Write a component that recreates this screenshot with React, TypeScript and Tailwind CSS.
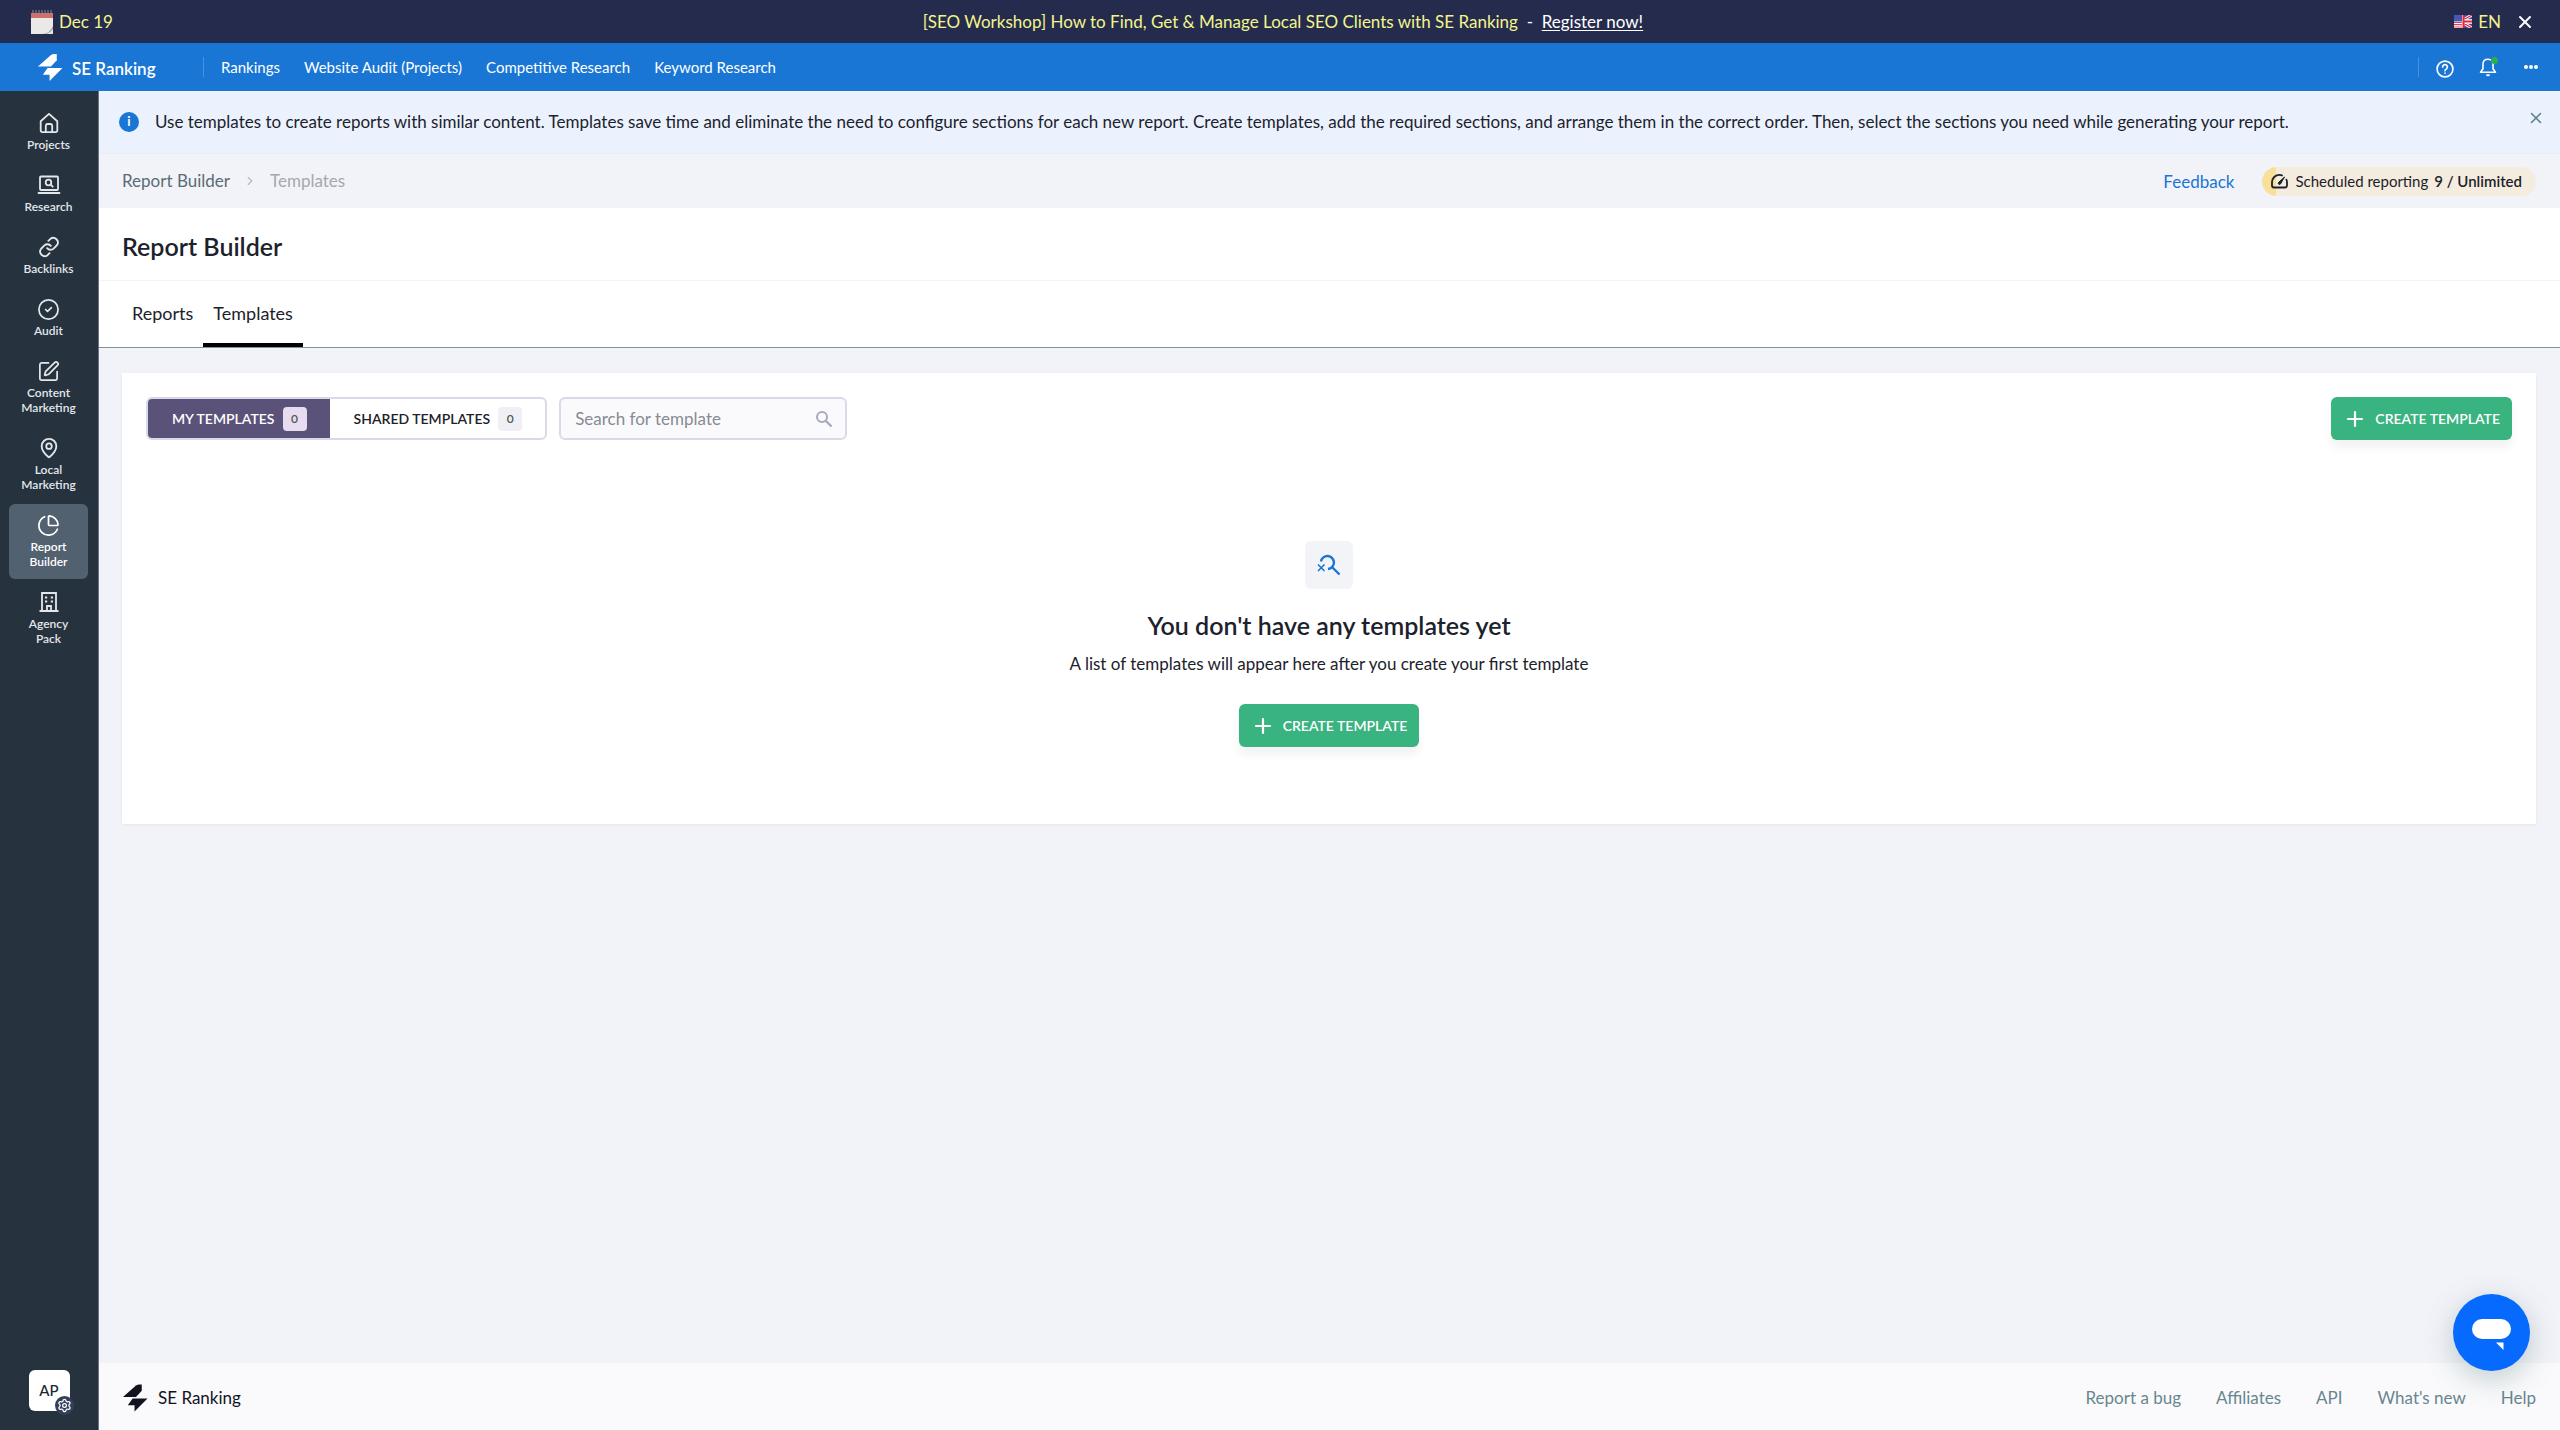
import React, { useState } from 'react';
import { X, ChevronRight, CircleCheck, SquarePen, MapPin, ChartPie, Plus, Settings } from 'lucide-react';

interface NavItem {
  label: string;
  icon: React.ReactNode;
}

const LaptopSearchIcon = () => (
  <svg width="24" height="20" viewBox="0 0 24 20" fill="none" stroke="currentColor" strokeWidth="1.8" strokeLinecap="round">
    <rect x="3" y="1.5" width="18" height="13.5" rx="1" />
    <path d="M1.5 18h21" />
    <circle cx="11.5" cy="7.5" r="2.8" />
    <path d="M13.7 9.7l2 2" />
  </svg>
);

const ChainIcon = () => (
  <svg width="22" height="22" viewBox="0 0 24 24" fill="none" stroke="currentColor" strokeWidth="2" strokeLinecap="round" strokeLinejoin="round">
    <path d="M10 13.2a4.8 4.8 0 0 0 7 .5l3.6-3.6a5 5 0 0 0-7-7L11.3 5.3" />
    <path d="M14 10.8a4.8 4.8 0 0 0-7-.5l-3.6 3.6a5 5 0 0 0 7 7l2.2-2.2" />
  </svg>
);

const HomeIcon = () => (
  <svg width="20" height="20" viewBox="0 0 20 20" fill="none" stroke="currentColor" strokeWidth="1.8" strokeLinejoin="round">
    <path d="M1.7 8.2L10 .9l8.3 7.3v9.3a1.6 1.6 0 0 1-1.6 1.6H3.3a1.6 1.6 0 0 1-1.6-1.6z" />
    <path d="M6.8 19v-6a2 2 0 0 1 2-2h2.4a2 2 0 0 1 2 2v6" />
  </svg>
);

const BuildingIcon = () => (
  <svg width="20" height="20" viewBox="0 0 20 20" fill="none" stroke="currentColor" strokeWidth="1.8">
    <path d="M.5 19h19M3 19V1h14v18M8 19v-5h4v5" />
    <path d="M6 5.5h2.2M11.8 5.5H14M6 9.5h2.2M11.8 9.5H14" strokeWidth="2" />
  </svg>
);

const BoltLogo = ({ className }: { className: string }) => (
  <svg className={className} viewBox="0 0 26 28" fill="currentColor">
    <path d="M0 13L13.5 1Q15 0 17 0h2.5v6.5L13.5 13z" />
    <path d="M10 14.5h15.5L12 28v-6.5H5z" />
  </svg>
);

const CalendarIcon = () => (
  <svg width="22" height="24" viewBox="0 0 22 24">
    <path d="M0 3h22v21H0z" fill="#ebe9e8" />
    <path d="M0 3h22v5H0z" fill="#cf6f6c" />
    <path d="M2 0v4M5 0v4M8 0v4M11 0v4M14 0v4M17 0v4M20 0v4" stroke="#8d8f9c" strokeWidth="1" />
    <path d="M12 24q7-1 10-8v8z" fill="#9b9b9b" />
    <path d="M15 24q5-2 7-5v5z" fill="#e4e4e4" />
  </svg>
);

const FlagIcon = () => (
  <svg width="18" height="13" viewBox="0 0 18 13">
    <path d="M0 0h18v13H0z" fill="#fff" />
    <path d="M0 7.5h8M0 9.7h8M0 12h8" stroke="#e0445a" strokeWidth="1.2" />
    <path d="M0 0h8v6.5H0z" fill="#4a56b5" />
    <path d="M9 0h9v13H9z" fill="#3c4aa8" />
    <path d="M9 5l9-5M9 8l9 5" stroke="#fff" strokeWidth="3" />
    <path d="M9 5l9-5M9 8l9 5" stroke="#e3243b" strokeWidth="1.2" />
    <path d="M8.5 6.5H18" stroke="#fff" strokeWidth="4.5" />
    <path d="M8.5 6.5H18M9.5 0v13" stroke="#e3243b" strokeWidth="2" />
  </svg>
);

const items: NavItem[] = [
  { label: 'Projects', icon: <HomeIcon /> },
  { label: 'Research', icon: <LaptopSearchIcon /> },
  { label: 'Backlinks', icon: <ChainIcon /> },
  { label: 'Audit', icon: <CircleCheck size={23} strokeWidth={1.8} /> },
  { label: 'Content Marketing', icon: <SquarePen size={23} strokeWidth={1.8} /> },
  { label: 'Local Marketing', icon: <MapPin size={22} strokeWidth={2} /> },
  { label: 'Report Builder', icon: <ChartPie size={23} strokeWidth={1.8} /> },
  { label: 'Agency Pack', icon: <BuildingIcon /> },
];

const topLinks = ['Rankings', 'Website Audit (Projects)', 'Competitive Research', 'Keyword Research'];
const footerLinks = ['Report a bug', 'Affiliates', 'API', "What's new", 'Help'];

const CreateButton = () => (
  <button className="flex h-[43px] items-center gap-2 rounded-md bg-[#39b380] px-3 text-[14px] font-semibold text-white shadow-[0_8px_10px_rgba(0,0,0,0.05)]">
    <Plus size={24} strokeWidth={2.2} />
    CREATE TEMPLATE
  </button>
);

const PromoBar = () => (
  <div className="grid h-[43px] grid-cols-[1fr_auto_1fr] items-center bg-[#252b4d] pl-[31px] pr-[25px] text-[17px] text-[#f3f58c]">
    <div className="flex items-center gap-[6px]">
      <CalendarIcon />
      Dec 19
    </div>
    <p>
      [SEO Workshop] How to Find, Get &amp; Manage Local SEO Clients with SE Ranking{' '}
      <span className="text-white">&nbsp;-&nbsp; <a href="#" className="underline underline-offset-2">Register now!</a></span>
    </p>
    <div className="flex items-center justify-end gap-[6px]">
      <FlagIcon />
      EN
      <button className="ml-2 text-white" aria-label="Close announcement"><X size={20} strokeWidth={2.4} /></button>
    </div>
  </div>
);

const TopNav = () => (
  <header className="flex h-12 items-center bg-[#1976d4] pr-[19px] text-white">
    <a href="#" className="flex w-[203px] items-center gap-[9px] pl-[38px] text-[17px] font-semibold">
      <BoltLogo className="h-[27px] w-[25px]" />
      <span className="pt-1">SE Ranking</span>
    </a>
    <nav className="flex items-center gap-6 border-l border-white/20 pl-[17px] text-[15px] leading-5">
      {topLinks.map((link) => (
        <a key={link} href="#">{link}</a>
      ))}
    </nav>
    <div className="ml-auto flex h-5 items-center gap-[23px] border-l border-white/20 pl-4">
      <button aria-label="Help" className="pt-1">
        <svg width="20" height="20" viewBox="0 0 24 24" fill="none" stroke="currentColor" strokeWidth="2" strokeLinecap="round">
          <circle cx="12" cy="12" r="9.5" />
          <path d="M9.2 9.7a2.8 2.8 0 1 1 4.5 2.1c-1 .7-1.7 1.2-1.7 2.4M12 17v.2" />
        </svg>
      </button>
      <button className="relative" aria-label="Notifications">
        <svg width="20" height="20" viewBox="0 0 20 20" fill="none" stroke="currentColor" strokeWidth="1.6" strokeLinejoin="round">
          <path d="M10 2.2c-3.2 0-5 2.200-5 5v4.600L2.500 15.200h15L15 11.800V7.200c0-2.800-1.800-5-5-5z" />
          <path d="M8.3 18.2h3.4" strokeWidth="1.8" />
        </svg>
        <span className="absolute right-0 top-0 h-[7px] w-[7px] rounded-full bg-[#27b04f]" />
      </button>
      <button className="flex h-5 w-5 items-center justify-center gap-px" aria-label="More">
        <span className="h-1 w-1 rounded-full bg-white" />
        <span className="h-1 w-1 rounded-full bg-white" />
        <span className="h-1 w-1 rounded-full bg-white" />
      </button>
    </div>
  </header>
);

const Sidebar = () => (
  <aside className="flex w-[99px] shrink-0 flex-col border-r border-[#6c7683] bg-[#26323d] pb-[19px] pt-[11px] text-[#e3e7ec]">
    <nav className="flex flex-col gap-[2px] pl-[9px] pr-[10px]">
      {items.map((item) => (
        <a
          key={item.label}
          href="#"
          className={`flex flex-col items-center gap-1 rounded-md px-2 pb-[10px] pt-[11px] text-center text-xs font-semibold leading-[15px] ${item.label === 'Report Builder' ? 'bg-[#526170] text-white' : ''}`}
        >
          <span className="flex h-5 items-center">{item.icon}</span>
          {item.label}
        </a>
      ))}
    </nav>
    <div className="mt-auto flex justify-center">
      <button className="relative h-[41px] w-[41px] rounded-md bg-white text-[15px] font-medium text-[#20262e]">
        AP
        <span className="absolute -bottom-1 -right-1 rounded-full bg-[#33405c] p-[2px] text-white"><Settings size={15} /></span>
      </button>
    </div>
  </aside>
);

const App = () => {
  const [query, setQuery] = useState('');

  return (
    <div className="flex min-h-screen flex-col bg-[#f2f3f8] font-[Lato,sans-serif] text-[#1c222b]">
      <PromoBar />
      <TopNav />
      <div className="flex flex-1">
        <Sidebar />
        <div className="flex min-w-0 flex-1 flex-col">
          {/* Hint */}
          <div className="flex h-[63px] items-center border-b border-[#e8eef8] bg-[#ebf2fe] pl-5 pr-[15px] text-[17px]">
            <span className="mr-4 flex h-5 w-5 shrink-0 items-center justify-center rounded-full bg-[#1976d4] text-[13px] font-bold text-white">i</span>
            <p>Use templates to create reports with similar content. Templates save time and eliminate the need to configure sections for each new report. Create templates, add the required sections, and arrange them in the correct order. Then, select the sections you need while generating your report.</p>
            <button className="mb-2 ml-auto text-[#5c7d8c]" aria-label="Close hint"><X size={18} /></button>
          </div>

          {/* Breadcrumbs */}
          <div className="flex h-[54px] items-center pl-[23px] pr-6 text-[17px]">
            <a href="#" className="text-[#5a6b77]">Report Builder</a>
            <ChevronRight size={14} className="mx-[13px] text-[#b4bac2]" />
            <span className="text-[#a3a8b0]">Templates</span>
            <a href="#" className="ml-auto mr-7 pt-[2px] text-[#1976d4]">Feedback</a>
            <div className="flex h-[29px] items-center gap-[6px] rounded-full bg-[linear-gradient(90deg,#f9e09a_14px,#f4eddf_14px)] pl-2 pr-[14px] text-[15px]">
              <svg width="19" height="17" viewBox="0 0 19 17" fill="none" stroke="currentColor" strokeWidth="1.8" strokeLinecap="round" strokeLinejoin="round">
                <path d="M12 2.4Q10.5 1.8 9.5 1.8A7.5 7.5 0 0 0 2 9.3V12.5q0 2 2 2H15q2 0 2-2V9.3q0-1.5-.6-2.7" />
                <path d="M8.5 9.5L14.5 4l-4 7a1.2 1.2 0 0 1-2-1.5z" fill="currentColor" strokeWidth="1" />
              </svg>
              Scheduled reporting
              <b className="text-[15px] font-semibold">9 / Unlimited</b>
            </div>
          </div>

          {/* Title and tabs */}
          <div className="bg-white">
            <h1 className="flex h-[73px] items-center border-b border-[#f2f3f6] px-[23px] pt-[6px] text-[25px] font-semibold">Report Builder</h1>
            <div className="flex h-[67px] border-b border-[#858d9a] pl-[23px] text-[18px]">
              <button className="border-b-4 border-transparent px-[10px] pt-[3px]">Reports</button>
              <button className="border-b-4 border-black px-[10px] pt-[3px]">Templates</button>
            </div>
          </div>

          <main className="flex-1 pb-6 pl-[23px] pr-6 pt-[25px]">
            <section className="bg-white px-6 pb-[77px] pt-6 shadow-[0_1px_3px_rgba(0,0,0,0.06)]">
              <div className="flex items-center gap-3">
                <div className="flex h-[43px] overflow-hidden rounded-md border-2 border-[#d9dae8] text-[14px] font-semibold">
                  <button className="flex items-center gap-2 bg-[#5b5279] pl-6 pr-[23px] text-white">
                    MY TEMPLATES
                    <span className="flex h-6 w-6 items-center justify-center rounded bg-[#e8dcf0] text-xs text-[#555]">0</span>
                  </button>
                  <button className="flex items-center gap-2 pl-6 pr-[23px]">
                    SHARED TEMPLATES
                    <span className="flex h-6 w-6 items-center justify-center rounded bg-[#f0eff5] text-xs text-[#555]">0</span>
                  </button>
                </div>
                <div className="flex h-[43px] w-[288px] items-center rounded-md border-2 border-[#d9dae8] bg-[#fafafd] pl-[14px] pr-3">
                  <input
                    aria-label="Search for template"
                    placeholder="Search for template"
                    value={query}
                    onChange={(e) => setQuery(e.target.value)}
                    className="min-w-0 flex-1 bg-transparent text-[17px] outline-none placeholder:text-[#878b92]"
                  />
                  <svg width="18" height="18" viewBox="0 0 18 18" fill="none" stroke="#a7a9bf" strokeWidth="2">
                    <circle cx="7" cy="7" r="5" />
                    <path d="M10.5 10.5l6 6" strokeWidth="2.4" />
                  </svg>
                </div>
                <div className="ml-auto"><CreateButton /></div>
              </div>

              <div className="flex flex-col items-center pt-[101px]">
                <div className="flex h-12 w-12 items-center justify-center rounded-md bg-[#f2f4f8]">
                  <svg width="24" height="24" viewBox="0 0 24 24" fill="none" stroke="#1976d4">
                    <path d="M4 8.500a6.500 6.500 0 1 1 7 7.500M15 14l7.500 7.500" strokeWidth="2.4" />
                    <path d="M1 11.500l6.500 6.500M7.500 11.500L1 18" strokeWidth="1.6" />
                  </svg>
                </div>
                <h2 className="mt-[18px] text-[25px] font-semibold leading-9">You don't have any templates yet</h2>
                <p className="mt-[9px] text-[17px] leading-6">A list of templates will appear here after you create your first template</p>
                <div className="mt-7"><CreateButton /></div>
              </div>
            </section>
          </main>

          <footer className="flex h-[67px] items-center bg-[#fafafc] pl-[24px] pr-6 pt-[2px] text-[17px]">
            <a href="#" className="flex items-center gap-[10px] text-[#12131f]">
              <BoltLogo className="h-7 w-[25px]" />
              SE Ranking
            </a>
            <nav className="ml-auto flex gap-[35px] text-[#68868f]">
              {footerLinks.map((link) => (
                <a key={link} href="#">{link}</a>
              ))}
            </nav>
          </footer>
        </div>
      </div>

      <button
        aria-label="Open chat"
        className="fixed bottom-[59px] right-[30px] flex h-[77px] w-[77px] items-center justify-center rounded-full bg-[#066aff] shadow-[0_8px_30px_rgba(60,100,100,0.3)]"
      >
        <svg className="mt-1" width="40" height="32" viewBox="0 0 40 32" fill="#fff">
          <rect x="0" y="0" width="39" height="20" rx="10" />
          <path d="M24 23.5h7.500v7.500z" />
        </svg>
      </button>
    </div>
  );
};

export default App;
